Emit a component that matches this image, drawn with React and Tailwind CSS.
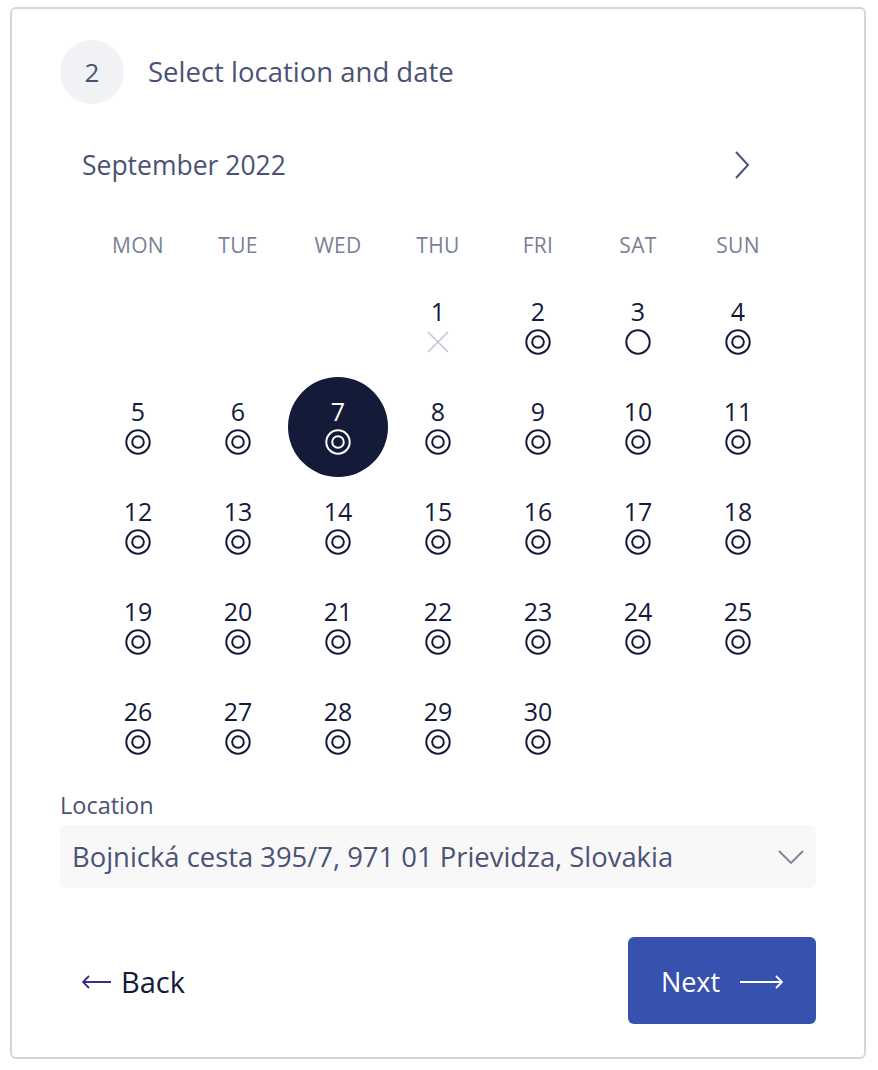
import React, { useState } from "react";

const days = [
  null, null, null,
  { n: 1, s: "closed" }, { n: 2, s: "open" }, { n: 3, s: "empty" }, { n: 4, s: "open" },
];
for (let i = 5; i <= 30; i++) days.push({ n: i, s: "open" });

const weekdays = ["MON", "TUE", "WED", "THU", "FRI", "SAT", "SUN"];

const DoubleRing = ({ light }) => (
  <svg width="26" height="26" viewBox="0 0 26 26" fill="none" stroke={light ? "#ffffff" : "#141a3a"} strokeWidth="2">
    <circle cx="13" cy="13" r="11.7" />
    <circle cx="13" cy="13" r="5.8" />
  </svg>
);

const Ring = () => (
  <svg width="26" height="26" viewBox="0 0 26 26" fill="none" stroke="#141a3a" strokeWidth="2">
    <circle cx="13" cy="13" r="11.7" />
  </svg>
);

const Cross = () => (
  <svg width="26" height="26" viewBox="0 0 26 26" fill="none" stroke="#c3c6cf" strokeWidth="1.6">
    <path d="M3 3 L23 23 M23 3 L3 23" />
  </svg>
);

const App = () => {
  const [selected, setSelected] = useState(7);

  return (
    <div className="min-h-screen bg-white pt-[7px] pl-[10px]" style={{ fontFamily: "'Open Sans', 'Noto Sans', sans-serif" }}>
      <div className="w-[856px] h-[1052px] border-2 border-[#d3d6dc] rounded-md px-[48px] pt-[31px]">
        <div className="flex items-center gap-6 h-16">
          <div className="w-16 h-16 rounded-full bg-[#f1f2f5] flex items-center justify-center text-[26px] text-[#4b5275]">2</div>
          <h2 className="text-[27.5px] text-[#4b5275]">Select location and date</h2>
        </div>

        <div className="mt-[42px] h-[40px] flex items-center justify-between pl-[22px] pr-[60px]">
          <span className="text-[26.5px] text-[#4b5275]">September 2022</span>
          <svg width="28" height="28" viewBox="0 0 28 28" fill="none" stroke="#4b5275" strokeWidth="2" className="-mt-[2px]">
            <path d="M8 1 L20 14 L8 27" />
          </svg>
        </div>

        <div className="mx-[28px]">
          <div className="mt-[40px] h-[40px] grid grid-cols-7">
            {weekdays.map((w) => (
              <div key={w} className="flex items-center justify-center text-[21px] text-[#7a7f98] tracking-[0.3px]">{w}</div>
            ))}
          </div>
          <div className="mt-[11px] grid grid-cols-7">
            {days.map((d, i) =>
              d ? (
                <button
                  key={i}
                  onClick={() => d.s === "open" && setSelected(d.n)}
                  className={`h-[100px] flex flex-col items-center justify-center rounded-full ${
                    selected === d.n ? "bg-[#141b38] text-white" : "text-[#141a3a]"
                  }`}
                >
                  <span className="text-[25px] leading-[28px] -mt-[3px]">{d.n}</span>
                  <span className="mt-[4px] block h-[26px]">
                    {d.s === "open" && <DoubleRing light={selected === d.n} />}
                    {d.s === "empty" && <Ring />}
                    {d.s === "closed" && <Cross />}
                  </span>
                </button>
              ) : (
                <div key={i} className="h-[100px]" />
              )
            )}
          </div>
        </div>

        <div className="mt-[16px] h-[24px] flex items-center pt-[2px] text-[23.5px] text-[#4b5275]">Location</div>
        <div className="mt-[8px] h-[63px] rounded-md bg-[#f8f8f9] flex items-center justify-between pl-[12px] pr-[12px]">
          <span className="text-[27.4px] text-[#4b5275] pt-[1px]">Bojnická cesta 395/7, 971 01 Prievidza, Slovakia</span>
          <svg width="26" height="16" viewBox="0 0 26 16" fill="none" stroke="#7d8199" strokeWidth="1.8">
            <path d="M1 2 L13 14 L25 2" />
          </svg>
        </div>

        <div className="mt-[49px] flex items-center justify-between">
          <button className="flex items-center gap-[10px] pl-[22px] text-[29px] text-[#141a3a]">
            <svg width="29" height="14" viewBox="0 0 29 14" fill="none" stroke="#3b2f7f" strokeWidth="1.8" className="mt-[2px]">
              <path d="M1 7 H29 M7 1 L1 7 L7 13" />
            </svg>
            <span className="pt-[3px]">Back</span>
          </button>
          <button className="w-[188px] h-[87px] rounded-md bg-[#3752ae] text-white text-[27px] flex items-center justify-center gap-[20px]">
            <span className="pt-[4px]">Next</span>
            <svg width="43" height="14" viewBox="0 0 43 14" fill="none" stroke="#ffffff" strokeWidth="1.8" className="mt-[2px]">
              <path d="M0 7 H42 M36 1 L42 7 L36 13" />
            </svg>
          </button>
        </div>
      </div>
    </div>
  );
};

export default App;
